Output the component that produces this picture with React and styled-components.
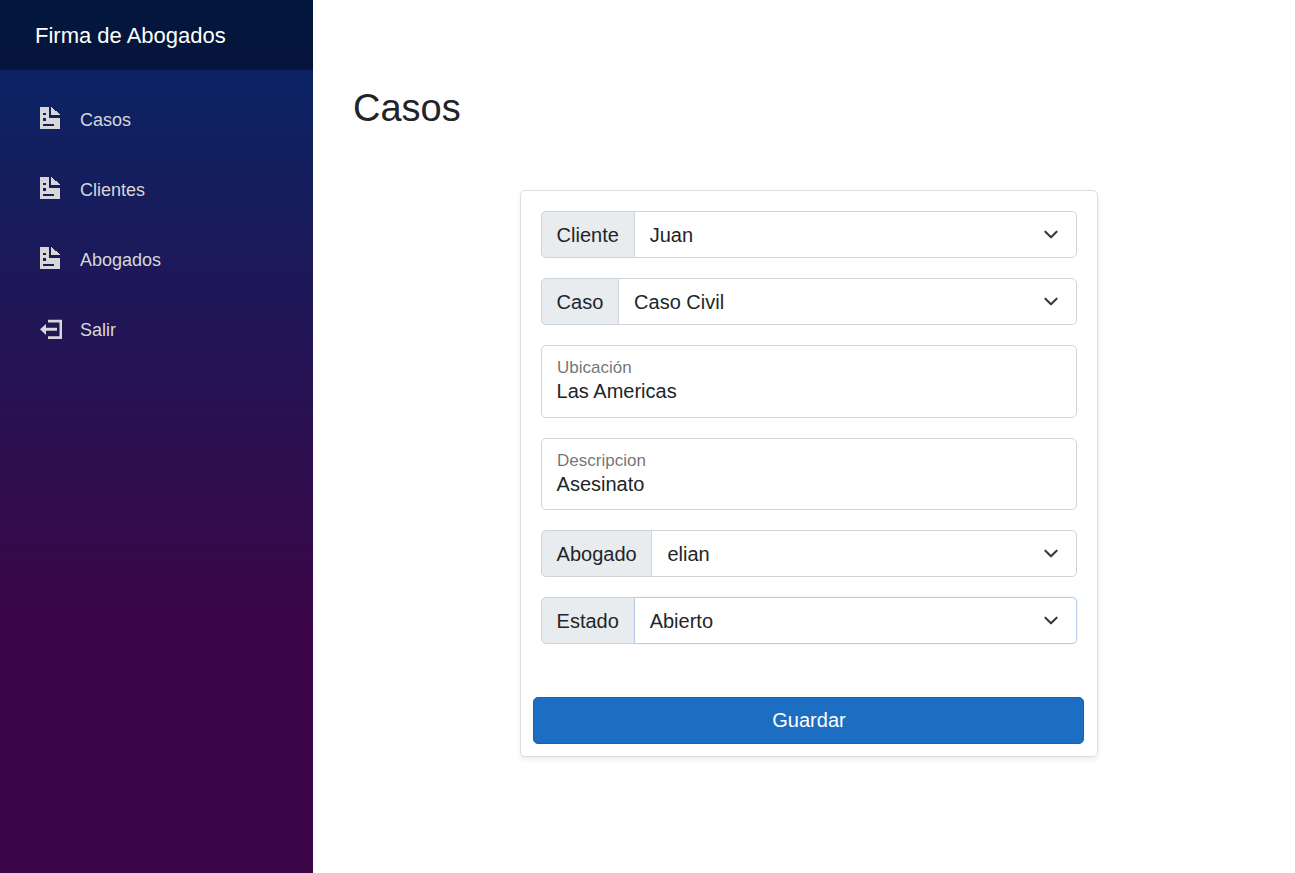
import React from "react";
import styled, { createGlobalStyle } from "styled-components";

const GlobalStyle = createGlobalStyle`
  *, *::before, *::after { box-sizing: border-box; }
  html { font-size: 20px; }
  body {
    margin: 0;
    background: #fff;
    color: #212529;
    font-family: "Liberation Sans", Arial, Helvetica, sans-serif;
    line-height: 1.5;
  }
`;

const Page = styled.div`
  display: flex;
  height: 873px;
  overflow: hidden;
`;

const Sidebar = styled.aside`
  flex: 0 0 313px;
  background-image: linear-gradient(180deg, rgb(5, 39, 103) 0%, #3a0647 70%);
`;

const TopRow = styled.div`
  display: flex;
  align-items: center;
  height: 70px;
  padding-left: 35px;
  background: rgba(0, 0, 0, 0.4);
`;

const Brand = styled.a`
  color: #fff;
  font-size: 22px;
`;

const Nav = styled.nav`
  display: flex;
  flex-direction: column;
  gap: 10px;
  padding: 20px;
`;

const NavLink = styled.a`
  display: flex;
  align-items: center;
  height: 60px;
  padding-left: 20px;
  color: #d7d7d7;
  font-size: 18px;
`;

const NavIcon = styled.svg`
  flex: none;
  width: 22px;
  height: 22px;
  margin: 0 18px ${(p) => p.$raise}px 0;
  fill: currentColor;
  shape-rendering: ${(p) => (p.$crisp ? "crispEdges" : "auto")};
`;

const Main = styled.main`
  flex: 1;
  padding: 85px 40px 0;
`;

const Title = styled.h2`
  margin: 0;
  font-size: 38px;
  font-weight: 400;
  line-height: 46px;
`;

const Card = styled.form`
  display: flex;
  flex-direction: column;
  width: 578px;
  height: 567px;
  margin: 59px 0 0 167px;
  padding: 20px 12px 12px;
  border: 1px solid #dcdddf;
  border-radius: 5px;
  box-shadow: 0 2.5px 5px rgba(0, 0, 0, 0.075);
`;

const Fields = styled.div`
  display: flex;
  flex-direction: column;
  gap: 20px;
  padding: 0 8px;
`;

const Group = styled.div`
  display: flex;
  height: 47px;
`;

const GroupLabel = styled.span`
  padding: 7.5px 14.8px 7.5px 14.6px;
  border: 1px solid #ced4da;
  border-radius: 5px 0 0 5px;
  background: #e9ecef;
  font-size: 20px;
  line-height: 30px;
`;

const Select = styled.div`
  display: flex;
  flex: 1;
  align-items: center;
  justify-content: space-between;
  margin-left: -1px;
  padding: 0 15px;
  border: 1px solid ${(p) => (p.$active ? "#b7cce5" : "#ced4da")};
  border-radius: 0 5px 5px 0;
  box-shadow: ${(p) => (p.$active ? "0 0 0 1px rgba(13, 110, 253, 0.05)" : "none")};
  background: #fff;
  font-size: 20px;
  line-height: 30px;
`;

const Chevron = styled.svg`
  width: 20px;
  height: 15px;
  fill: none;
  stroke: #343a40;
  stroke-width: 2.2;
  stroke-linecap: round;
  stroke-linejoin: round;
`;

const FloatingField = styled.div`
  display: flex;
  flex-direction: column;
  height: 72.5px;
  padding: 10px 15px 0 14.6px;
  border: 1px solid #ced4da;
  border-radius: 5px;
`;

const FloatingLabel = styled.span`
  padding-left: 0.5px;
  color: rgba(33, 37, 41, 0.65);
  font-size: 17px;
  line-height: 24px;
`;

const FloatingValue = styled.span`
  font-size: 20px;
  line-height: 22px;
`;

const SubmitButton = styled.button`
  height: 47px;
  width: 551px;
  margin-top: auto;
  padding: 0 0 2px 1px;
  border: 1px solid #1861ac;
  border-radius: 5px;
  background: #1b6ec2;
  color: #fff;
  font: 20px/30px "Liberation Sans", Arial, sans-serif;
`;

const DocumentIcon = () => (
  <NavIcon viewBox="0 0 22 22" $raise={4} $crisp>
    <path d="M0 0h9v11h11v11H0zM11 0v8h9v-.5L11.5 0zM3 6v2h3V6zM3 11v3h3v-3zM3 17v2h11v-2z" fillRule="evenodd" />
  </NavIcon>
);

const LogoutIcon = () => (
  <NavIcon viewBox="0 0 22 22" $raise={0}>
    <path d="M8 .7h14.3V20H8v-2.8h11.5V3.4H8zM6 5v3.8h11v3H6V16L0 10.3z" />
  </NavIcon>
);

const SelectField = ({ label, value, active }) => (
  <Group>
    <GroupLabel>{label}</GroupLabel>
    <Select $active={active} role="combobox" aria-label={label}>
      {value}
      <Chevron viewBox="0 0 16 16">
        <path d="m2 5 6 6 6-6" />
      </Chevron>
    </Select>
  </Group>
);

const TextField = ({ label, value }) => (
  <FloatingField>
    <FloatingLabel>{label}</FloatingLabel>
    <FloatingValue>{value}</FloatingValue>
  </FloatingField>
);

export default function App() {
  return (
    <>
      <GlobalStyle />
      <Page>
        <Sidebar>
          <TopRow>
            <Brand>Firma de Abogados</Brand>
          </TopRow>
          <Nav>
            {["Casos", "Clientes", "Abogados"].map((name) => (
              <NavLink key={name}>
                <DocumentIcon />
                {name}
              </NavLink>
            ))}
            <NavLink>
              <LogoutIcon />
              Salir
            </NavLink>
          </Nav>
        </Sidebar>
        <Main>
          <Title>Casos</Title>
          <Card>
            <Fields>
              <SelectField label="Cliente" value="Juan" />
              <SelectField label="Caso" value="Caso Civil" />
              <TextField label="Ubicación" value="Las Americas" />
              <TextField label="Descripcion" value="Asesinato" />
              <SelectField label="Abogado" value="elian" />
              <SelectField label="Estado" value="Abierto" active />
            </Fields>
            <SubmitButton type="button">Guardar</SubmitButton>
          </Card>
        </Main>
      </Page>
    </>
  );
}
